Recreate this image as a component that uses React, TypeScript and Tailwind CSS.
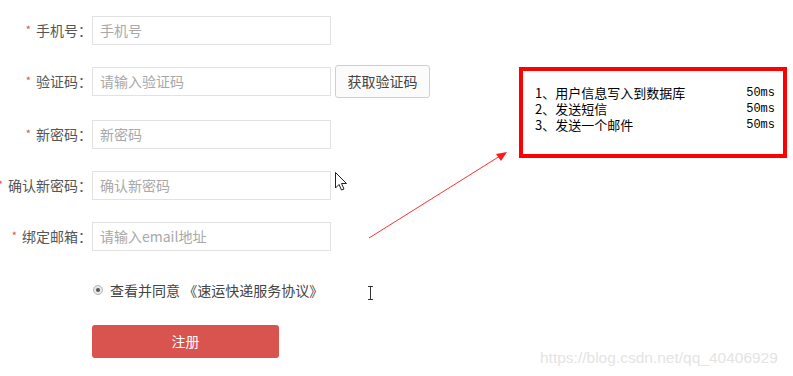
import React from 'react';

const cn = '"Microsoft YaHei", "Noto Sans CJK SC", sans-serif';

type Field = { label: string; placeholder: string; mt: string; code?: boolean };

const fields: Field[] = [
  { label: '手机号', placeholder: '手机号', mt: 'mt-[16px]' },
  { label: '验证码', placeholder: '请输入验证码', mt: 'mt-[22px]', code: true },
  { label: '新密码', placeholder: '新密码', mt: 'mt-[24px]' },
  { label: '确认新密码', placeholder: '确认新密码', mt: 'mt-[22px]' },
  { label: '绑定邮箱', placeholder: '请输入email地址', mt: 'mt-[22px]' },
];

const steps = [
  { text: '1、用户信息写入到数据库', time: '50ms' },
  { text: '2、发送短信', time: '50ms' },
  { text: '3、发送一个邮件', time: '50ms' },
];

const FormRow: React.FC<{ field: Field }> = ({ field }) => (
  <div className={`flex items-center h-[29px] ${field.mt}`}>
    <label className="w-[92px] shrink-0 flex justify-end items-center whitespace-nowrap text-[14px] text-[#555]">
      <span className="text-[#e05050] text-[11px] mr-[5px] -mt-[3px]">*</span>
      <span>{field.label}：</span>
    </label>
    <div className="w-[239px] h-[29px] border border-[#e2e2e2] flex items-center pl-[7px] text-[14px] text-[#a8a8a8]">
      {field.placeholder}
    </div>
    {field.code && (
      <button className="ml-[4px] w-[95px] h-[33px] border border-[#cfcfcf] rounded-[3px] bg-[#fbfbfb] text-[14px] text-[#444]">
        获取验证码
      </button>
    )}
  </div>
);

export default function App() {
  return (
    <div className="relative w-[793px] h-[376px] bg-white overflow-hidden flex" style={{ fontFamily: cn }}>
      <div className="w-[519px] shrink-0 flex flex-col">
        {fields.map(f => (
          <FormRow key={f.label} field={f} />
        ))}

        <div className="mt-[30px] ml-[93px] flex items-center h-[18px] text-[14px] text-[#444]">
          <span className="w-[10px] h-[10px] rounded-full border border-[#b5b5b5] bg-[#e8e8e8] flex items-center justify-center">
            <span className="w-[4px] h-[4px] rounded-full bg-[#555]" />
          </span>
          <span className="ml-[7px]">查看并同意 《速运快递服务协议》</span>
        </div>

        <button className="mt-[26px] ml-[92px] w-[187px] h-[33px] rounded-[3px] bg-[#d9534f] text-white text-[14px]">
          注册
        </button>
      </div>

      <div className="mt-[67px] w-[268px] h-[91px] border-[4px] border-[#ff0000] pt-[14px] pl-[12px] pr-[8px] text-[13px] leading-[16px] text-black"
        style={{ fontFamily: '"SimSun", "Noto Sans CJK SC", monospace' }}>
        {steps.map(s => (
          <div key={s.text} className="flex justify-between">
            <span>{s.text}</span>
            <span style={{ fontFamily: '"Liberation Mono", monospace' }} className="text-[12px]">{s.time}</span>
          </div>
        ))}
      </div>

      <svg className="absolute left-0 top-0 pointer-events-none" width="793" height="376">
        <line x1="369" y1="238" x2="500" y2="156" stroke="#ff3030" strokeWidth="1" />
        <polygon points="507,152 496,154 501,161" fill="#ff1a1a" />
        <path d="M335.5 172.5 L335.5 188 L339 184.5 L341.5 190 L344 189 L341.5 183.5 L346.5 183.5 Z" fill="white" stroke="#222" strokeWidth="1" />
        <path d="M368 286.5 H373 M370.5 286.5 V299.5 M368 299.5 H373" stroke="#333" strokeWidth="1" />
      </svg>

      <div className="absolute left-[540px] top-[346px] text-[15.5px] text-[#e4e4e4]" style={{ fontFamily: '"Liberation Sans", Arial, sans-serif' }}>
        https://blog.csdn.net/qq_40406929
      </div>
    </div>
  );
}
